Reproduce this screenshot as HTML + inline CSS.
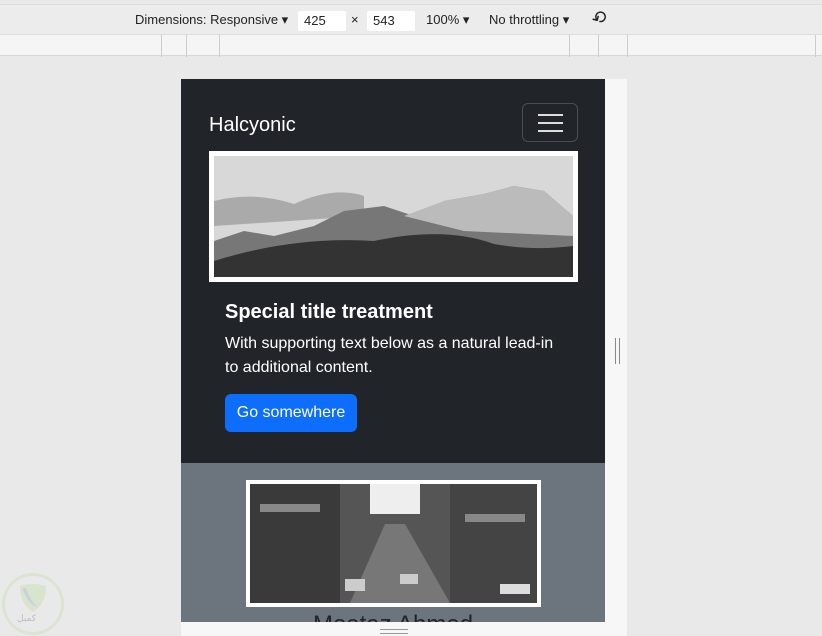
<!DOCTYPE html>
<html><head><meta charset="utf-8">
<style>
*{box-sizing:border-box;margin:0;padding:0}
body{width:822px;height:636px;overflow:hidden;background:#e9e9e9;font-family:"Liberation Sans",sans-serif;position:relative}
.abs{position:absolute}
.tb{left:0;top:4px;width:822px;height:30px;background:#ececec;border-top:1px solid #ddd}
.tb span{position:absolute;top:7px;font-size:13px;color:#222}
.inp{position:absolute;top:6px;height:20px;background:#fff;border-radius:2px;font-size:13px;padding:2px 6px;color:#222}
.row2{left:0;top:34px;width:822px;height:22px;background:#f5f5f5;border-top:1px solid #ddd;border-bottom:1px solid #d8d8d8}
.vl{position:absolute;top:0;width:1px;height:22px;background:#ccc}
.vp{left:181px;top:79px;width:424px;height:543px;overflow:hidden;background:#6c757d}
.dark{left:0;top:0;width:424px;height:384px;background:#212529}
</style></head><body>
<div class="abs tb">
<span style="left:135px">Dimensions: Responsive ▾</span>
<div class="inp" style="left:298px;width:48px">425</div>
<span style="left:351px">×</span>
<div class="inp" style="left:367px;width:48px">543</div>
<span style="left:426px">100% ▾</span>
<span style="left:489px">No throttling ▾</span>
<span style="left:592px;font-size:18px;top:3px;transform:rotate(-30deg)">⟲</span>
</div>
<div class="abs row2">
<div class="vl" style="left:161px"></div><div class="vl" style="left:186px"></div><div class="vl" style="left:219px"></div>
<div class="vl" style="left:569px"></div><div class="vl" style="left:598px"></div><div class="vl" style="left:627px"></div><div class="vl" style="left:815px"></div>
</div>
<div class="abs" style="left:605px;top:79px;width:22px;height:543px;background:#f7f7f7"></div>
<div class="abs" style="left:615px;top:338px;height:26px;border-left:1px solid #888;border-right:1px solid #888;width:5px"></div>
<div class="abs" style="left:181px;top:622px;width:446px;height:14px;background:#f7f7f7"></div>
<div class="abs" style="left:380px;top:629px;width:28px;height:5px;border-top:1px solid #999;border-bottom:1px solid #999"></div>
<div class="abs vp">
<div class="abs dark">
<div class="abs" style="left:28px;top:35px;color:#fff;font-size:20px">Halcyonic</div>
<div class="abs" style="left:341px;top:24px;width:56px;height:39px;border:1px solid #4a4d52;border-radius:6px">
<div class="abs" style="left:15px;top:10px;width:25px;height:2px;background:#ddd"></div>
<div class="abs" style="left:15px;top:18px;width:25px;height:2px;background:#ddd"></div>
<div class="abs" style="left:15px;top:26px;width:25px;height:2px;background:#ddd"></div>
</div>
<div class="abs" style="left:28px;top:72px;width:369px;height:131px;background:#fff;padding:5px">
<svg width="359" height="121" viewBox="0 0 359 121">
<rect width="359" height="121" fill="#d8d8d8"/>
<path d="M0 45 Q40 35 80 48 Q120 30 150 40 L150 60 L0 70Z" fill="#aaa"/>
<path d="M0 85 L30 75 L60 80 L100 70 L130 55 L170 50 L200 60 L230 45 L270 38 L300 30 L330 35 L359 60 L359 121 L0 121Z" fill="#777"/>
<path d="M190 60 L230 45 L270 38 L300 30 L330 35 L359 60 L359 80 L250 75Z" fill="#bbb"/>
<path d="M0 105 Q80 80 160 85 Q230 70 280 88 Q320 95 359 90 L359 121 L0 121Z" fill="#333"/>
</svg></div>
<div class="abs" style="left:44px;top:222px;color:#fff;font-size:20px;font-weight:bold">Special title treatment</div>
<div class="abs" style="left:44px;top:253px;width:340px;color:#fff;font-size:16px;line-height:24px">With supporting text below as a natural lead-in to additional content.</div>
<div class="abs" style="left:44px;top:315px;width:132px;height:38px;background:#0d6efd;border-radius:6px;color:#fff;font-size:16px;line-height:38px;text-align:center">Go somewhere</div>
</div>
<div class="abs" style="left:65px;top:401px;width:295px;height:127px;background:#fff;padding:4px">
<svg width="287" height="119" viewBox="0 0 287 119">
<rect width="287" height="119" fill="#555"/>
<rect x="120" y="0" width="50" height="30" fill="#eee"/>
<rect x="0" y="0" width="90" height="119" fill="#3a3a3a"/>
<rect x="200" y="0" width="87" height="119" fill="#444"/>
<rect x="10" y="20" width="60" height="8" fill="#888"/><rect x="215" y="30" width="60" height="8" fill="#888"/>
<path d="M100 119 L135 40 L155 40 L200 119Z" fill="#777"/>
<rect x="95" y="95" width="20" height="12" fill="#ccc"/><rect x="150" y="90" width="18" height="10" fill="#ccc"/><rect x="250" y="100" width="30" height="10" fill="#ddd"/>
</svg></div>
<div class="abs" style="left:0;top:532px;width:424px;text-align:center;color:#212529;font-size:24px">Moataz Ahmed</div>
</div>
<div class="abs" style="left:2px;top:573px;width:62px;height:62px;border-radius:50%;border:3px solid #d6e3c8;opacity:.7">
<svg class="abs" style="left:13px;top:6px" width="30" height="32" viewBox="0 0 30 32"><path d="M2 4 Q15 0 28 4 Q28 22 15 30 Q2 22 2 4Z" fill="#d1e3bf"/><path d="M4 6 Q10 22 20 26 Q12 18 8 6Z" fill="#bcc9d6"/></svg>
<div class="abs" style="left:12px;top:38px;font-size:9px;color:#aaa;font-family:'DejaVu Sans',sans-serif">كمبل</div>
</div>
</body></html>
